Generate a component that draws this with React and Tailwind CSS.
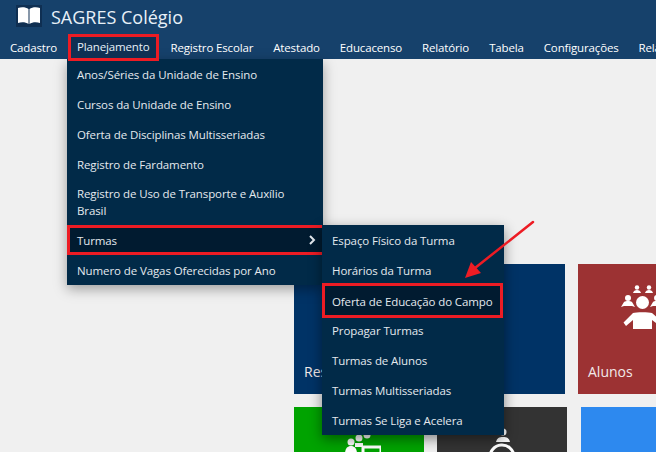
const navItems = ["Cadastro", "Planejamento", "Registro Escolar", "Atestado", "Educacenso", "Relatório", "Tabela", "Configurações", "Relatórios"];

const planItems = [
  "Anos/Séries da Unidade de Ensino",
  "Cursos da Unidade de Ensino",
  "Oferta de Disciplinas Multisseriadas",
  "Registro de Fardamento",
  "Registro de Uso de Transporte e Auxílio Brasil",
];

const turmaItems = [
  "Espaço Físico da Turma",
  "Horários da Turma",
  "Oferta de Educação do Campo",
  "Propagar Turmas",
  "Turmas de Alunos",
  "Turmas Multisseriadas",
  "Turmas Se Liga e Acelera",
];

function BookIcon() {
  return (
    <svg width="26" height="22" viewBox="0 0 26 22" className="bg-[#0f2f52]">
      <path d="M2 3c3-1 8-1 10.500 1v15c-2.500-2-7.500-2-10.500-1z" fill="#fff" />
      <path d="M24 3c-3-1-8-1-10.500 1v15c2.500-2 7.500-2 10.500-1z" fill="#fff" />
    </svg>
  );
}

function PeopleIcon() {
  return (
    <svg width="64" height="50" viewBox="0 0 64 50" fill="#fff">
      <circle cx="26" cy="2.500" r="2.200" />
      <path d="M22 8c.5-2 2-3 4-3s3.500 1 4 3z" />
      <circle cx="38" cy="2.500" r="2.200" />
      <path d="M34 8c.5-2 2-3 4-3s3.500 1 4 3z" />
      <circle cx="17" cy="13" r="3" />
      <path d="M10 22l3-5c1-1 2.500-1 4-1s3 0 4 1l3 5-3-1H13z" />
      <circle cx="31.500" cy="17.500" r="6.500" />
      <circle cx="46" cy="13" r="3" />
      <path d="M39 22l3-5c1-1 2.500-1 4-1s3 0 4 1l3 5-3-1h-8z" />
      <path d="M22 28c3-1 16-1 19 0l9 8-2.500 4-6.500-5v9H22v-9l-7 6-2.500-3.500z" />
    </svg>
  );
}

function GroupIcon() {
  return (
    <svg width="44" height="26" viewBox="0 0 44 26" fill="#fff">
      <circle cx="30" cy="7" r="3.500" />
      <circle cx="22" cy="10" r="3.500" />
      <circle cx="14" cy="14" r="3.500" />
      <path d="M8 26c0-5 2-8 6-8s6 3 6 8z" />
      <path d="M18 15h8v4h-8z" />
      <path d="M26 19h18v7H26z" fillOpacity="0" stroke="#fff" strokeWidth="3" />
    </svg>
  );
}

function ClockIcon() {
  return (
    <svg width="36" height="26" viewBox="0 0 36 26" fill="none" stroke="#fff">
      <circle cx="19" cy="4" r="3.500" fill="#fff" stroke="none" />
      <path d="M12 14c1-4 3-5 7-5s6 1 7 5z" fill="#fff" stroke="none" />
      <path d="M6 30a12 12 0 0 1 24-2" strokeWidth="3" />
    </svg>
  );
}

function Tile({ className, label, children }) {
  return (
    <div className={`relative h-[130px] shrink-0 flex flex-col items-center pt-[21px] ${className}`}>
      {children}
      {label && <span className="absolute left-[10px] bottom-[12px] text-[14px] leading-5 text-[#f2e9e9]">{label}</span>}
    </div>
  );
}

export default function App() {
  return (
    <div className="relative w-[656px] h-[452px] overflow-hidden bg-[#f0f0f0] text-[11.5px] font-['Open_Sans','Noto_Sans',sans-serif]">
      <header className="h-[59px] bg-[#16416b] text-white">
        <div className="flex items-center h-[37px] pl-[16px] pb-[5px]">
          <BookIcon />
          <span className="ml-[9px] mt-[2px] text-[18px] leading-6 text-[#e8f0f8]">SAGRES Colégio</span>
        </div>
        <nav className="flex h-[22px] items-center whitespace-nowrap tracking-[-0.15px]">
          {navItems.map((item) =>
            item === "Planejamento" ? (
              <a key={item} className="relative z-10 block h-[27px] ml-[1px] mr-[1px] -mt-[3px] -mb-[2px] pl-[6px] pr-[7px] border-[3px] border-[#ed1c24] bg-[#0f3053] leading-[19px] text-[#e8f0f8]">
                {item}
              </a>
            ) : (
              <a key={item} className="block px-[10px] leading-[18px]">
                {item}
              </a>
            )
          )}
        </nav>
      </header>

      <main className="pl-[294px] pt-[205px]">
        <div className="flex gap-[13px]">
          <Tile className="w-[271px] bg-[#003366]" label="Resumo" />
          <Tile className="w-[130px] bg-[#9c3233]" label="Alunos">
            <PeopleIcon />
          </Tile>
        </div>
        <div className="flex gap-[13px] mt-[13px]">
          <Tile className="w-[130px] bg-[#00a300]">
            <GroupIcon />
          </Tile>
          <Tile className="w-[130px] bg-[#333333]">
            <ClockIcon />
          </Tile>
          <Tile className="w-[130px] ml-px bg-[#2d89ef]" />
        </div>
      </main>

      {/* dropdown */}
      <div className="absolute left-[67px] top-[59px] w-[256px] bg-[#012a48] text-[#e4e9ee] shadow-[0_4px_12px_rgba(0,0,0,0.35)] tracking-[-0.1px]">
        {planItems.map((item) => (
          <div key={item} className="px-[10px] py-[6px] leading-[17px] min-h-[30px] flex items-center">
            {item}
          </div>
        ))}
        <div className="flex items-center justify-between h-[30px] w-[258px] border-[3px] border-[#ed1c24] bg-[#011b30] pl-[7px] pr-[6px]">
          <span className="pt-[2px]">Turmas</span>
          <svg width="8" height="10" viewBox="0 0 8 10" fill="none" stroke="#e4e9ee" strokeWidth="2">
            <path d="M2 1l4 4-4 4" />
          </svg>
        </div>
        <div className="px-[10px] pt-[2px] h-[30px] flex items-center">Numero de Vagas Oferecidas por Ano</div>
      </div>

      {/* submenu */}
      <div className="absolute left-[322px] top-[225px] w-[182px] bg-[#012a48] text-[#e4e9ee] shadow-[0_4px_12px_rgba(0,0,0,0.45)] tracking-[-0.1px]">
        {turmaItems.map((item) =>
          item === "Oferta de Educação do Campo" ? (
            <div key={item} className="relative flex items-center h-[35px] w-[181px] -mt-[2px] -mb-[3px] border-[3px] border-[#ed1c24] bg-[#011b30] pl-[7px] pt-[2px] whitespace-nowrap">
              {item}
            </div>
          ) : (
            <div key={item} className="px-[10px] pt-[2px] h-[30px] flex items-center whitespace-nowrap">
              {item}
            </div>
          )
        )}
      </div>

      {/* red arrow */}
      <svg className="absolute left-[460px] top-[215px]" width="80" height="70" viewBox="0 0 80 70">
        <path d="M73 7L15 53" stroke="#ed1c24" strokeWidth="2.500" strokeLinecap="round" />
        <path d="M5 63l6-16 10 11z" fill="#ed1c24" />
      </svg>
    </div>
  );
}
